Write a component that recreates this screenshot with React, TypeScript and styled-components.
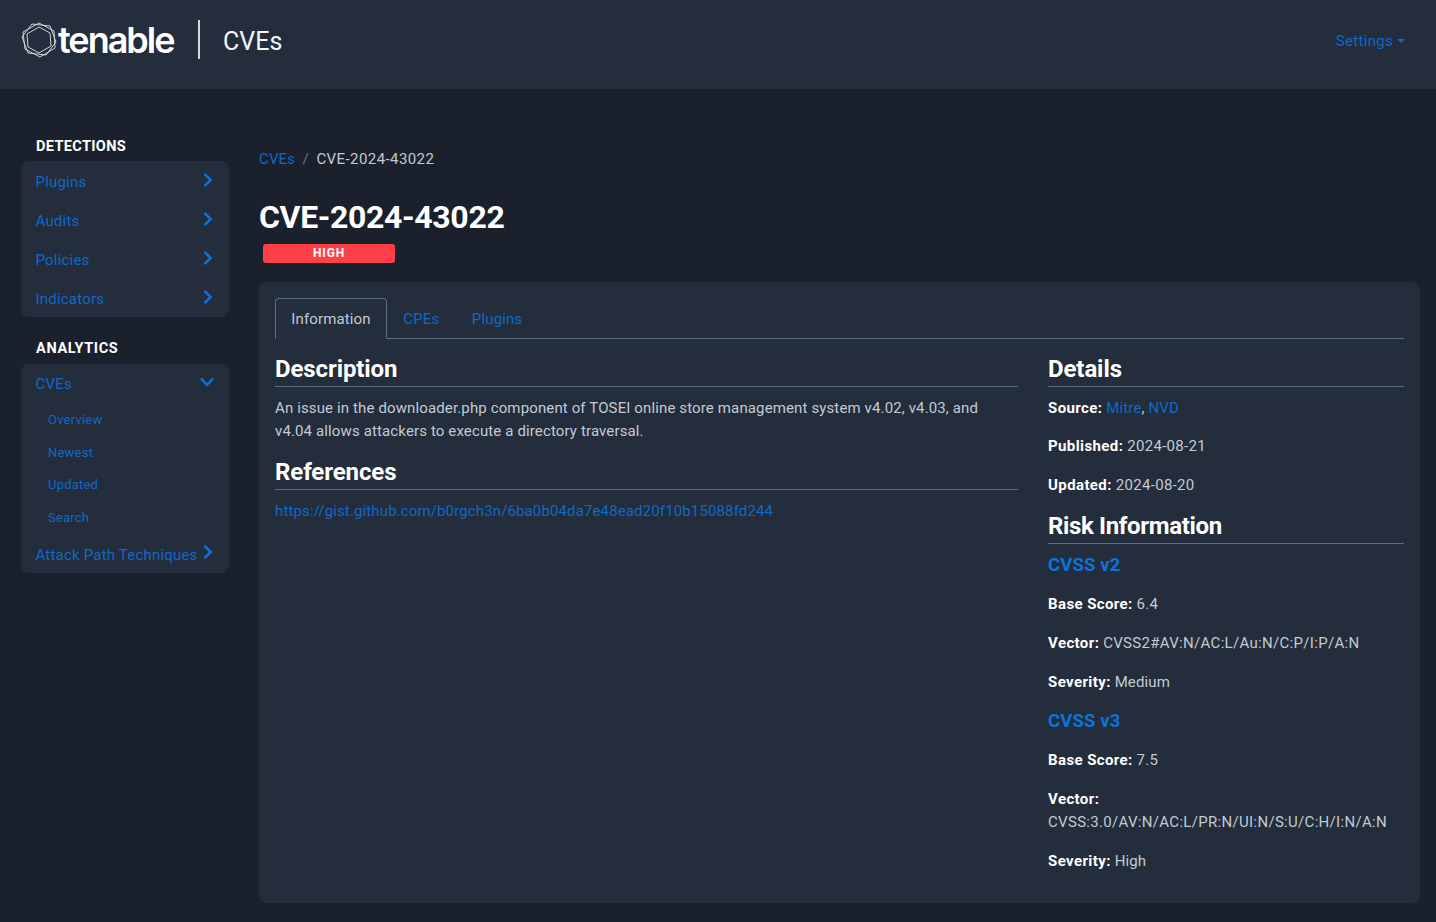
import React from "react";
import styled, { createGlobalStyle } from "styled-components";
import { FaChevronRight, FaChevronDown } from "react-icons/fa";

const Global = createGlobalStyle`
  html, body { margin: 0; padding: 0; background: #1b212c; }
  body { font-family: Roboto, "Noto Sans", sans-serif; font-size: 15px; line-height: 23px; letter-spacing: 0.13px; color: #c3cad5; }
  * { box-sizing: border-box; }
  a { color: #0f69c9; text-decoration: none; }
`;

const Page = styled.div`min-height: 922px; display: flex; flex-direction: column;`;
const Header = styled.header`
  height: 89px; background: #242d3b; display: flex; align-items: center; justify-content: space-between;
  padding: 0 31px 6px 21px;
`;
const Brand = styled.div`display: flex; align-items: center;`;
const Lockup = styled.div`display: flex; align-items: center; margin-top: -4px;`;
const LogoMark = styled.svg`width: 36px; height: 36px; flex: none;`;
const LogoWord = styled.span`
  font-family: Inter, Roboto, sans-serif; font-weight: 600; font-size: 36px; line-height: 40px; letter-spacing: -2px; color: #fff; margin-left: 1px; width: 118px;
`;
const Divider = styled.span`width: 2px; height: 39px; background: #d5d8dd; margin: 0 23px 0 22px;`;
const BrandTitle = styled.span`font-size: 25px; line-height: 30px; color: #f2f5f8; letter-spacing: 0;`;
const SettingsLink = styled.a`display: flex; align-items: center; gap: 4px; font-size: 15px; letter-spacing: 0.3px;`;
const Caret = styled.span`width: 0; height: 0; border-left: 4px solid transparent; border-right: 4px solid transparent; border-top: 4px solid #0f69c9; margin-top: -2px;`;

const Body = styled.div`display: flex; padding: 0 16px 19px 21px; flex: 1;`;
const Sidebar = styled.aside`width: 208px; flex: none; padding-top: 46px; margin-right: 30px;`;
const SectionLabel = styled.div<{ $gap: number; $track: number }>`
  font-weight: 700; color: #fff; font-size: 14.5px; line-height: 24px; letter-spacing: ${(p) => p.$track}px; padding-left: 15px; margin-bottom: ${(p) => p.$gap}px;
`;
const NavCard = styled.nav`background: #242d3b; border-radius: 8px; margin-bottom: 20px;`;
const NavRow = styled.a<{ $lift?: boolean }>`
  height: 39px; display: flex; align-items: center; justify-content: space-between; padding: ${(p) => (p.$lift ? 3 : 4)}px 14.5px 0 14.5px; font-size: 15px; letter-spacing: 0.2px; white-space: nowrap;
  svg { color: #0a74dc; font-size: 16px; margin-top: -6px; flex: none; }
`;
const OpenRow = styled(NavRow)`height: 37px; svg { margin-top: -4px; }`;
const RightChevron = styled(FaChevronRight)`margin-right: -1.5px;`;
const SubList = styled.div`padding-top: 2px;`;
const SubRow = styled.a`display: flex; align-items: center; height: 32.8px; padding-left: 27px; font-size: 13px; letter-spacing: 0.22px;`;

const Main = styled.main`flex: 1; min-width: 0; padding-top: 59px;`;
const Crumbs = styled.div`display: flex; height: 23px; align-items: center; font-size: 15px;`;
const CrumbSep = styled.span`margin: 0 7.5px; color: #6c757d;`;
const CrumbCurrent = styled.span`letter-spacing: 0.42px;`;
const Title = styled.h1`margin: 27px 0 0; font-size: 32px; line-height: 38px; font-weight: 700; letter-spacing: -0.35px; color: #fff;`;
const Badge = styled.div`
  width: 132px; height: 19px; margin: 8px 0 19px 4px; background: #ff4049; border-radius: 3px; color: #fff;
  font-size: 12px; line-height: 19px; font-weight: 700; letter-spacing: 0.8px; text-align: center;
`;
const Card = styled.section`background: #242d3b; border-radius: 8px; padding: 16px; min-height: 621px;`;
const Tabs = styled.div`display: flex; height: 41px; border-bottom: 1px solid #5d6c85;`;
const Tab = styled.a<{ $active?: boolean }>`
  height: 41px; padding: 9px 15.3px 0; font-size: 15px;
  border: 1px solid ${(p) => (p.$active ? "#5d6c85" : "transparent")};
  border-bottom-color: ${(p) => (p.$active ? "#242d3b" : "transparent")};
  border-radius: 4px 4px 0 0;
  color: ${(p) => (p.$active ? "#c3cad5" : "#0f69c9")};
`;
const Columns = styled.div`display: grid; grid-template-columns: 743px 356px; column-gap: 30px; padding-top: 16px;`;
const Column = styled.div`min-width: 0; > p:last-child { margin-bottom: 0; }`;
const Heading = styled.h3<{ $tightText?: boolean }>`
  margin: 0 0 10px; font-size: 24px; line-height: 29px; font-weight: 700; letter-spacing: ${(p) => (p.$tightText ? -0.35 : -0.1)}px; color: #fff; border-bottom: 1px solid #5d6c85; padding-bottom: 2px; height: 32px;
`;
const Para = styled.p<{ $tight?: boolean }>`margin: 0 0 ${(p) => (p.$tight ? 15 : 16)}px;`;
const CvssTitle = styled.h4`margin: 0 0 16px; font-size: 18.5px; line-height: 23px; font-weight: 700;`;
const CvssLink = styled.a`color: #0a74dc;`;
const Label = styled.strong`font-weight: 700; color: #fff; letter-spacing: 0.4px;`;
const Value = styled.span<{ $wide?: boolean }>`letter-spacing: ${(p) => (p.$wide ? 0.31 : 0.13)}px;`;

const Field = ({ label, tight, wide, children }: { label: string; tight?: boolean; wide?: boolean; children: React.ReactNode }) => (
  <Para $tight={tight}><Label>{label}:</Label> <Value $wide={wide}>{children}</Value></Para>
);

export default function App() {
  return (
    <Page>
      <Global />
      <Header>
        <Brand>
          <Lockup>
            <LogoMark viewBox="0 0 36 36" fill="none" stroke="#cfd3da" strokeWidth="1">
              <polygon points="18,1 33,9 34,26 19,35 4,27 2,10" />
              <polygon points="11,2 29,4 35,20 25,33 7,31 1,15" />
              <polygon points="18,5 29,11 30,24 18,31 7,25 6,12" />
            </LogoMark>
            <LogoWord>tenable</LogoWord>
            <Divider />
          </Lockup>
          <BrandTitle>CVEs</BrandTitle>
        </Brand>
        <SettingsLink href="#">Settings<Caret /></SettingsLink>
      </Header>
      <Body>
        <Sidebar>
          <SectionLabel $gap={2} $track={0.35}>DETECTIONS</SectionLabel>
          <NavCard>
            <NavRow href="#">Plugins<RightChevron /></NavRow>
            <NavRow href="#">Audits<RightChevron /></NavRow>
            <NavRow href="#">Policies<RightChevron /></NavRow>
            <NavRow href="#">Indicators<RightChevron /></NavRow>
          </NavCard>
          <SectionLabel $gap={3} $track={0.65}>ANALYTICS</SectionLabel>
          <NavCard>
            <OpenRow $lift href="#">CVEs<FaChevronDown /></OpenRow>
            <SubList>
              <SubRow href="#">Overview</SubRow>
              <SubRow href="#">Newest</SubRow>
              <SubRow href="#">Updated</SubRow>
              <SubRow href="#">Search</SubRow>
            </SubList>
            <NavRow $lift href="#">Attack Path Techniques<RightChevron /></NavRow>
          </NavCard>
        </Sidebar>
        <Main>
          <Crumbs><a href="#">CVEs</a><CrumbSep>/</CrumbSep><CrumbCurrent>CVE-2024-43022</CrumbCurrent></Crumbs>
          <Title>CVE-2024-43022</Title>
          <Badge>HIGH</Badge>
          <Card>
            <Tabs>
              <Tab $active href="#">Information</Tab>
              <Tab href="#">CPEs</Tab>
              <Tab href="#">Plugins</Tab>
            </Tabs>
            <Columns>
              <Column>
                <Heading>Description</Heading>
                <Para $tight>An issue in the downloader.php component of TOSEI online store management system v4.02, v4.03, and v4.04 allows attackers to execute a directory traversal.</Para>
                <Heading>References</Heading>
                <Para><a href="#">https://gist.github.com/b0rgch3n/6ba0b04da7e48ead20f10b15088fd244</a></Para>
              </Column>
              <Column>
                <Heading>Details</Heading>
                <Field tight label="Source"><a href="#">Mitre</a>, <a href="#">NVD</a></Field>
                <Field wide label="Published">2024-08-21</Field>
                <Field tight wide label="Updated">2024-08-20</Field>
                <Heading $tightText>Risk Information</Heading>
                <CvssTitle><CvssLink href="#">CVSS v2</CvssLink></CvssTitle>
                <Field wide label="Base Score">6.4</Field>
                <Field wide label="Vector">CVSS2#AV:N/AC:L/Au:N/C:P/I:P/A:N</Field>
                <Field label="Severity">Medium</Field>
                <CvssTitle><CvssLink href="#">CVSS v3</CvssLink></CvssTitle>
                <Field wide label="Base Score">7.5</Field>
                <Field wide label="Vector">CVSS:3.0/AV:N/AC:L/PR:N/UI:N/S:U/C:H/I:N/A:N</Field>
                <Field label="Severity">High</Field>
              </Column>
            </Columns>
          </Card>
        </Main>
      </Body>
    </Page>
  );
}
